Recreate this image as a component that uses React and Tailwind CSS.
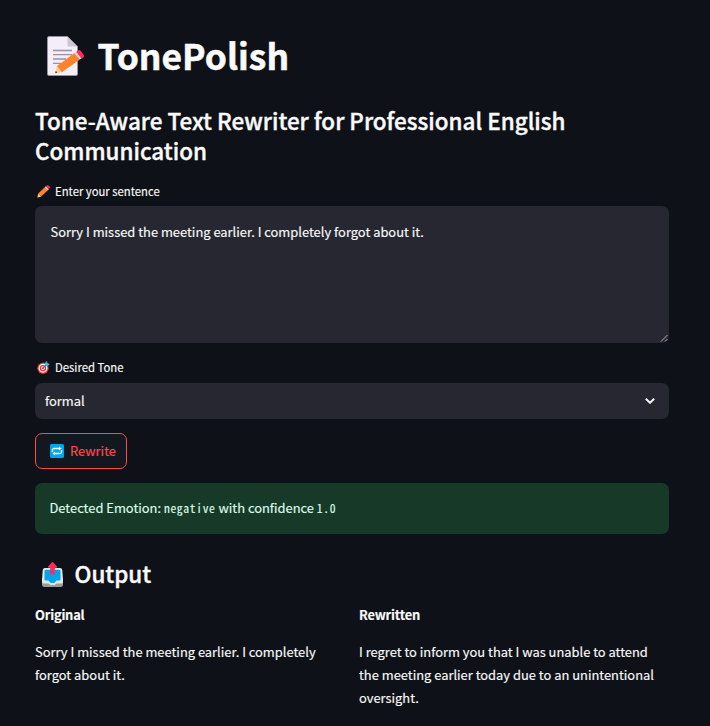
import React from "react";

function MemoIcon() {
  return (
    <svg className="ml-[11px] h-[40px] w-[38px] shrink-0" viewBox="0 0 38 40" fill="none">
      <path d="M2 .5h18.500L30.500 10.500V38a1.500 1.500 0 0 1-1.500 1.500H2A1.500 1.500 0 0 1 .5 38V2A1.500 1.500 0 0 1 2 .5z" transform="translate(1 0)" fill="#f3eef8" stroke="#998ea4" />
      <path d="M21.500 .8v8.200a1.500 1.500 0 0 0 1.500 1.500h8.300z" fill="#cdc4d6" />
      <path d="M7 14.500h19M7 18.700h19M7 23h13M7 27.300h8" stroke="#998ea4" strokeWidth="1.300" />
      <path d="M9.200 37.200l1.800-7.300 4.800 6.100z" fill="#ffce7c" />
      <path d="M9.200 37.200l.6-2.300 1.600 1.700z" fill="#402a32" />
      <path d="M11 29.900L28.500 17.100l5 6.700L15.800 36.300z" fill="#ff822d" />
      <path d="M28.500 17.100l2.400-1.800 5 6.700-2.400 1.800z" fill="#d3d3d3" />
      <path d="M30.300 15.700l1.700-1.200a2 2 0 0 1 2.800.4l2.800 3.900a2 2 0 0 1-.4 2.700l-1.700 1.300z" fill="#fc2d5d" />
    </svg>
  );
}

function PencilIcon() {
  return (
    <svg className="ml-[2px] h-[13px] w-[13px] shrink-0" viewBox="0 0 13 13">
      <path d="M.2 12.700l1-4.100 3 3z" fill="#ffce7c" />
      <path d="M1.200 8.600L8.300 1.800l3 3-7.100 6.800z" fill="#ff822d" />
      <path d="M7.800 2.300l1-1 3 3-1 1z" fill="#d3d3d3" />
      <path d="M8.900 1.200L9.800.4a1.200 1.200 0 0 1 1.600 0l1.200 1.200a1.100 1.100 0 0 1 0 1.600l-.8.9z" fill="#fc2d5d" />
      <path d="M.2 12.700l.4-1.400 1 1z" fill="#402a32" />
    </svg>
  );
}

function TargetIcon() {
  return (
    <svg className="ml-[2px] h-[13px] w-[13px] shrink-0" viewBox="0 0 13 13" fill="none">
      <circle cx="6" cy="7.200" r="5.700" fill="#e3322f" />
      <circle cx="6" cy="7.200" r="3.800" stroke="#fff" strokeWidth="1.300" />
      <circle cx="6" cy="7.200" r="1.500" stroke="#fff" strokeWidth="1" />
      <path d="M6 7.200L10 3.200" stroke="#1c7ccc" strokeWidth="1.200" />
      <path d="M8 3V1.700L9.800 0l.7 2.300 2.400.8-1.800 1.700H9.200z" fill="#3fb8f5" />
    </svg>
  );
}

function RepeatIcon() {
  return (
    <svg className="h-[14px] w-[14px] shrink-0" viewBox="0 0 14 14" fill="none">
      <rect width="14" height="14" rx="1.500" fill="#00a6ed" />
      <path d="M2.400 8V6a1.500 1.500 0 0 1 1.500-1.500h6M11.600 6v2a1.500 1.500 0 0 1-1.500 1.500h-6" stroke="#fff" strokeWidth="1.300" />
      <path d="M9 2.600l2.600 1.900L9 6.400zM5 7.600L2.400 9.500 5 11.400z" fill="#fff" />
    </svg>
  );
}

function OutboxIcon() {
  return (
    <svg className="ml-[7px] h-[25px] w-[21px] shrink-0" viewBox="0 0 21 25">
      <path d="M0 16h21v6.500a2.500 2.500 0 0 1-2.500 2.500h-16A2.500 2.500 0 0 1 0 22.500z" fill="#9b9b9b" />
      <path d="M3 6h15a2.500 2.500 0 0 1 2.300 2.200L21 18v2a1.500 1.500 0 0 1-1.500 1.500h-5L12.700 23H8.300l-1.800-1.500h-5A1.500 1.500 0 0 1 0 20v-2L.7 8.200A2.500 2.500 0 0 1 3 6z" fill="#e6e6e6" />
      <path d="M4 7.700h13a1.500 1.500 0 0 1 1.500 1.500v8.300a1 1 0 0 1-1 1h-3L12.300 21H8.700l-2.200-2.500h-3a1 1 0 0 1-1-1V9.200A1.500 1.500 0 0 1 4 7.700z" fill="#00a6ed" />
      <path d="M9.700.4a1.100 1.100 0 0 1 1.600 0l3.500 3.900c.5.600.2 1.400-.7 1.400H12.800v6.800H8.200V5.700H6.900c-.9 0-1.200-.8-.7-1.400z" fill="#fc2d5d" />
    </svg>
  );
}

export default function App() {
  return (
    <main className="h-[726px] w-[710px] overflow-hidden bg-[#0e1117] pl-[35px] pr-[41px] pt-[28px] font-['Noto_Sans_CJK_JP','Noto_Sans_CJK_SC',sans-serif] text-[12.900px] text-[#fafafa] [-webkit-text-stroke:0.15px]">
      <h1 className="flex h-[56px] items-center whitespace-nowrap text-[35.400px] font-bold leading-[54px] [-webkit-text-stroke:0.5px]">
        <MemoIcon />
        <span className="ml-[13.500px] pb-[2px]">TonePolish</span>
      </h1>
      <h2 className="mt-[21px] h-[60px] whitespace-nowrap text-[22.450px] font-medium leading-[30px] [-webkit-text-stroke:0.4px]">
        Tone-Aware Text Rewriter for Professional English
        <br />
        Communication
      </h2>
      <label className="mt-[16px] flex h-[21px] items-center whitespace-nowrap text-[11.300px] leading-[21px]">
        <PencilIcon />
        <span className="ml-[5px]">Enter your sentence</span>
      </label>
      <div className="relative mt-[4px] h-[137px] rounded-[7px] bg-[#262730] px-[15.500px] pt-[15px] leading-[22px]">
        <p>Sorry I missed the meeting earlier. I completely forgot about it.</p>
        <svg className="absolute bottom-[1px] right-[1px] h-[8px] w-[8px]" viewBox="0 0 8 8">
          <path d="M1 7.500L7.500 1M5 7.500L7.500 5" stroke="#c4c4c6" strokeWidth=".9" />
        </svg>
      </div>
      <label className="mt-[14px] flex h-[21px] items-center whitespace-nowrap text-[11.300px] leading-[21px]">
        <TargetIcon />
        <span className="ml-[5px]">Desired Tone</span>
      </label>
      <div className="mt-[5px] flex h-[36px] items-center justify-between rounded-[7px] bg-[#262730] pl-[10px] pr-[14px]">
        <span>formal</span>
        <svg className="h-[6px] w-[10px]" viewBox="0 0 10 6" fill="none">
          <path d="M.8 .8L5 4.800L9.200 .8" stroke="#fafafa" strokeWidth="1.900" />
        </svg>
      </div>
      <button className="mt-[14px] flex h-[36px] w-[92px] items-center whitespace-nowrap rounded-[7px] border border-[#ff4b4b] bg-[#131720] pl-[14px] text-[#ff4b4b]">
        <RepeatIcon />
        <span className="ml-[6px]">Rewrite</span>
      </button>
      <p className="mt-[14px] h-[51px] whitespace-pre rounded-[7px] bg-[#173928] pl-[14.500px] pt-[14px] leading-[22px] text-[#dffde9]">
        Detected Emotion:{" "}
        <code className="font-['Noto_Sans_Mono_CJK_JP','DejaVu_Sans_Mono',monospace] text-[11.600px] leading-none tracking-[0.650px]">negative</code>
        {" "}with confidence{" "}
        <code className="font-['Noto_Sans_Mono_CJK_JP','DejaVu_Sans_Mono',monospace] text-[11.600px] leading-none tracking-[0.650px]">1.0</code>
      </p>
      <h2 className="mt-[24px] flex h-[32px] items-center whitespace-nowrap text-[22.450px] font-medium leading-[30px] [-webkit-text-stroke:0.4px]">
        <OutboxIcon />
        <span className="ml-[11.500px] pb-[2px]">Output</span>
      </h2>
      <div className="mt-[13px] grid grid-cols-2 gap-[14px] whitespace-nowrap leading-[23px]">
        <section>
          <h3 className="font-bold tracking-[-0.015em]">Original</h3>
          <p className="mt-[14px]">
            Sorry I missed the meeting earlier. I completely
            <br />
            forgot about it.
          </p>
        </section>
        <section>
          <h3 className="font-bold tracking-[-0.015em]">Rewritten</h3>
          <p className="mt-[14px]">
            I regret to inform you that I was unable to attend
            <br />
            the meeting earlier today due to an unintentional
            <br />
            oversight.
          </p>
        </section>
      </div>
    </main>
  );
}
